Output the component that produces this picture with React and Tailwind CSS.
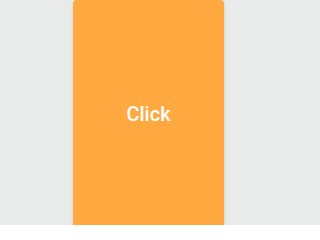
export default function App() {
    return (
        <div className="flex h-[225px] w-full overflow-hidden bg-[#e9ebeb] pl-[73px]">
            <div className="flex h-[240px] w-[151px] shrink-0 items-center justify-center rounded-[4px] bg-[#ffa940] shadow-[0_1px_3px_rgba(0,0,0,0.15)]">
                <span className="mt-[-12px] font-['Roboto',sans-serif] text-[20px] font-medium text-white">
                    Click
                </span>
            </div>
        </div>
    );
}
